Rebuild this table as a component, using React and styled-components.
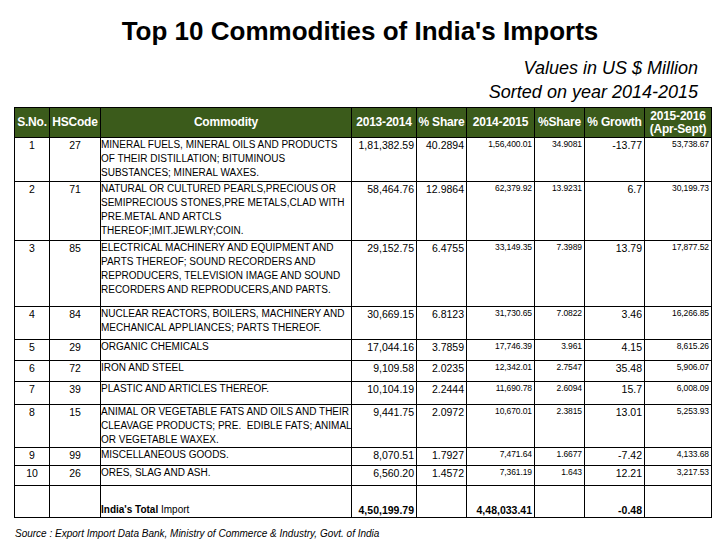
import React from "react";
import styled, { createGlobalStyle } from "styled-components";

const rows = [
  {
    sno: 1, hs: 27, h: 44,
    name: ["MINERAL FUELS, MINERAL OILS AND PRODUCTS", "OF THEIR DISTILLATION; BITUMINOUS", "SUBSTANCES; MINERAL WAXES."],
    v13: "1,81,382.59", s13: "40.2894", v14: "1,56,400.01", s14: "34.9081", g: "-13.77", v15: "53,738.67",
  },
  {
    sno: 2, hs: 71, h: 59,
    name: ["NATURAL OR CULTURED PEARLS,PRECIOUS OR", "SEMIPRECIOUS STONES,PRE METALS,CLAD WITH", "PRE.METAL AND ARTCLS", "THEREOF;IMIT.JEWLRY;COIN."],
    v13: "58,464.76", s13: "12.9864", v14: "62,379.92", s14: "13.9231", g: "6.7", v15: "30,199.73",
  },
  {
    sno: 3, hs: 85, h: 66,
    name: ["ELECTRICAL MACHINERY AND EQUIPMENT AND", "PARTS THEREOF; SOUND RECORDERS AND", "REPRODUCERS, TELEVISION IMAGE AND SOUND", "RECORDERS AND REPRODUCERS,AND PARTS."],
    v13: "29,152.75", s13: "6.4755", v14: "33,149.35", s14: "7.3989", g: "13.79", v15: "17,877.52",
  },
  {
    sno: 4, hs: 84, h: 33,
    name: ["NUCLEAR REACTORS, BOILERS, MACHINERY AND", "MECHANICAL APPLIANCES; PARTS THEREOF."],
    v13: "30,669.15", s13: "6.8123", v14: "31,730.65", s14: "7.0822", g: "3.46", v15: "16,266.85",
  },
  {
    sno: 5, hs: 29, h: 21,
    name: ["ORGANIC CHEMICALS"],
    v13: "17,044.16", s13: "3.7859", v14: "17,746.39", s14: "3.961", g: "4.15", v15: "8,615.26",
  },
  {
    sno: 6, hs: 72, h: 21,
    name: ["IRON AND STEEL"],
    v13: "9,109.58", s13: "2.0235", v14: "12,342.01", s14: "2.7547", g: "35.48", v15: "5,906.07",
  },
  {
    sno: 7, hs: 39, h: 23,
    name: ["PLASTIC AND ARTICLES THEREOF."],
    v13: "10,104.19", s13: "2.2444", v14: "11,690.78", s14: "2.6094", g: "15.7", v15: "6,008.09",
  },
  {
    sno: 8, hs: 15, h: 42,
    name: ["ANIMAL OR VEGETABLE FATS AND OILS AND THEIR", "CLEAVAGE PRODUCTS; PRE.  EDIBLE FATS; ANIMAL", "OR VEGETABLE WAXEX."],
    v13: "9,441.75", s13: "2.0972", v14: "10,670.01", s14: "2.3815", g: "13.01", v15: "5,253.93",
  },
  {
    sno: 9, hs: 99, h: 18,
    name: ["MISCELLANEOUS GOODS."],
    v13: "8,070.51", s13: "1.7927", v14: "7,471.64", s14: "1.6677", g: "-7.42", v15: "4,133.68",
  },
  {
    sno: 10, hs: 26, h: 20,
    name: ["ORES, SLAG AND ASH."],
    v13: "6,560.20", s13: "1.4572", v14: "7,361.19", s14: "1.643", g: "12.21", v15: "3,217.53",
  },
];

export default function App() {
  return (
    <Page>
      <GlobalStyle />
      <Title>Top 10 Commodities of India's Imports</Title>
      <Sub>
        <div>Values in US $ Million</div>
        <div>Sorted on year 2014-2015</div>
      </Sub>
      <Table>
        <thead>
          <tr>
            <Head w={34}>S.No.</Head>
            <Head w={50}>HSCode</Head>
            <Head w={250}>Commodity</Head>
            <Head w={64}>2013-2014</Head>
            <Head w={49}>% Share</Head>
            <Head w={67}>2014-2015</Head>
            <Head w={49}>%Share</Head>
            <Head w={59}>% Growth</Head>
            <Head w={66}>
              2015-2016
              <br />
              (Apr-Sept)
            </Head>
          </tr>
        </thead>
        <tbody>
          {rows.map((r) => (
            <Row key={r.sno} h={r.h}>
              <Cell center>{r.sno}</Cell>
              <Cell center>{r.hs}</Cell>
              <Commodity>
                {r.name.map((line, i) => (
                  <Line key={i}>{line}</Line>
                ))}
              </Commodity>
              <Num>{r.v13}</Num>
              <Num>{r.s13}</Num>
              <Num small>{r.v14}</Num>
              <Num small>{r.s14}</Num>
              <Num>{r.g}</Num>
              <Num small>{r.v15}</Num>
            </Row>
          ))}
          <Row h={32}>
            <Cell />
            <Cell />
            <Commodity bottom>
              <b>India's Total</b> Import
            </Commodity>
            <Num bottom bold>4,50,199.79</Num>
            <Num bottom />
            <Num bottom bold>4,48,033.41</Num>
            <Num bottom />
            <Num bottom bold>-0.48</Num>
            <Num bottom />
          </Row>
        </tbody>
      </Table>
      <Source>
        Source : Export Import Data Bank, Ministry of Commerce &amp; Industry, Govt. of India
      </Source>
    </Page>
  );
}

const GlobalStyle = createGlobalStyle`
  body {
    margin: 0;
    background: #fff;
    font-family: "Liberation Sans", Arial, sans-serif;
    color: #000;
  }
`;

const Page = styled.div`
  width: 720px;
  height: 540px;
  overflow: hidden;
  padding-top: 17px;
  box-sizing: border-box;
`;

const Title = styled.h1`
  margin: 0;
  font-size: 26px;
  line-height: 28px;
  font-weight: bold;
  text-align: center;
`;

const Sub = styled.div`
  margin-top: 11px;
  padding-right: 22px;
  text-align: right;
  font-style: italic;
  font-size: 18px;
  line-height: 24px;
`;

const Table = styled.table`
  margin: 3px 0 0 14px;
  width: 689px;
  border-collapse: collapse;
  table-layout: fixed;
`;

const Head = styled.th`
  width: ${(p) => p.w}px;
  height: 29px;
  padding: 0;
  background: #3b5b1b;
  color: #fff;
  border: 1px solid #000;
  font-size: 12px;
  line-height: 13px;
  font-weight: bold;
  letter-spacing: -0.2px;
  text-align: center;
  white-space: nowrap;
  overflow: hidden;
`;

const Row = styled.tr`
  height: ${(p) => p.h}px;
`;

const Cell = styled.td`
  border: 1px solid #000;
  padding: 0;
  vertical-align: top;
  text-align: ${(p) => (p.center ? "center" : "left")};
  font-size: 10.5px;
  line-height: 14px;
`;

const Commodity = styled.td`
  border: 1px solid #000;
  padding: 0;
  vertical-align: ${(p) => (p.bottom ? "bottom" : "top")};
  font-size: 10px;
  line-height: 14px;
  overflow: hidden;
`;

const Line = styled.span`
  display: block;
  white-space: pre;
`;

const Num = styled.td`
  border: 1px solid #000;
  padding: ${(p) => (p.small ? "1px 2px 0 0" : "0 2px 0 0")};
  vertical-align: ${(p) => (p.bottom ? "bottom" : "top")};
  text-align: right;
  white-space: nowrap;
  font-size: ${(p) => (p.small ? "8.5px" : "10.5px")};
  letter-spacing: ${(p) => (p.small ? "-0.1px" : "0")};
  font-weight: ${(p) => (p.bold ? "bold" : "normal")};
  line-height: ${(p) => (p.small ? "11px" : "14px")};
`;

const Source = styled.div`
  margin: 10px 0 0 15px;
  font-size: 10px;
  line-height: 12px;
  font-style: italic;
`;
